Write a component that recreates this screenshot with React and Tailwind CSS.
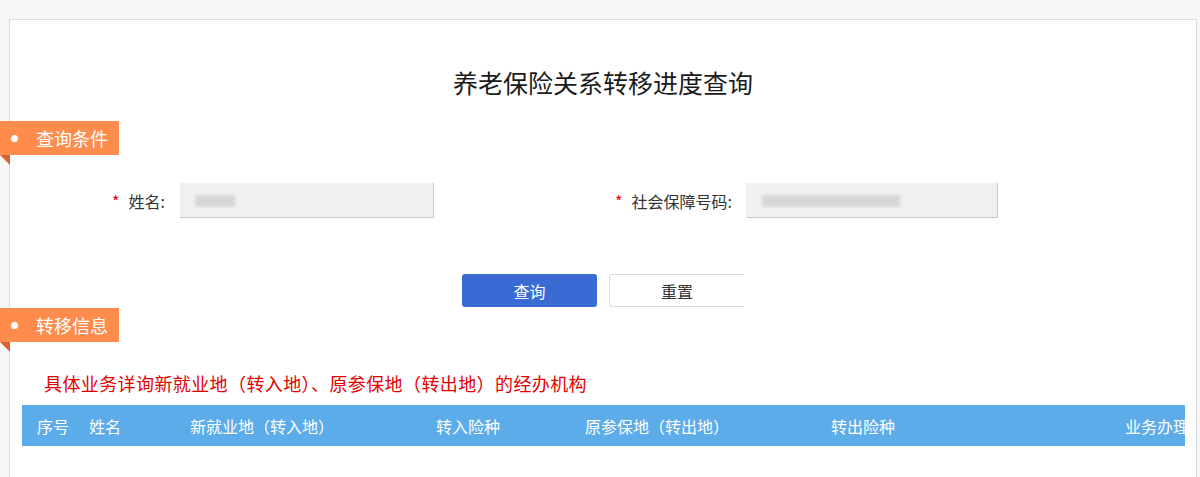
import React from 'react'

const font = { fontFamily: '"Noto Sans CJK SC", "Noto Sans", sans-serif' }

const SectionTag = ({ title }) => {
    return (
        <div className="-ml-[10px] w-[119px]">
            <div className="flex h-[34px] items-center bg-[#ff8c4c]">
                <span className="ml-[11px] h-[7px] w-[7px] rounded-full bg-white" />
                <span className="ml-[18px] text-[18px] leading-none text-white">{title}</span>
            </div>
            {/* folded corner */}
            <div className="h-[10px] w-[10px] bg-[#d8632c] [clip-path:polygon(0_0,100%_0,100%_100%)]" />
        </div>
    )
}

const BlurInput = ({ width, blob }) => {
    return (
        <div className={`relative h-[35px] ${width} overflow-hidden border-r border-b border-[#c9c9c9] bg-[#f2f0ef]`}>
            <div className={`absolute top-[12px] h-[12px] ${blob} bg-[#d9d7d6] blur-[1.5px]`} />
        </div>
    )
}

const columns = [
    { label: '序号', w: 'w-[52px]' },
    { label: '姓名', w: 'w-[101px]' },
    { label: '新就业地（转入地）', w: 'w-[246px]' },
    { label: '转入险种', w: 'w-[149px]' },
    { label: '原参保地（转出地）', w: 'w-[246px]' },
    { label: '转出险种', w: 'w-[294px]' },
    { label: '业务办理', w: 'w-[80px]' },
]

export default function App() {
    return (
        <div className="h-[477px] overflow-hidden bg-[#f8f8f8] pt-[19px] pl-[9px] pr-[3px]" style={font}>
            <div className="min-h-[470px] border border-b-0 border-[#dcdcdc] bg-white">

                {/* TITLE */}
                <h1 className="pt-[46px] text-center text-[25px] leading-[32px] text-[#1a1a1a]">
                    养老保险关系转移进度查询
                </h1>

                <div className="mt-[23px]">
                    <SectionTag title="查询条件" />
                </div>

                {/* FORM */}
                <div className="mt-[18px] flex items-center text-[16px] text-[#333]">
                    <div className="w-[155px] text-right">
                        <span className="mr-[9px] text-[#e60012]">*</span>姓名:
                    </div>
                    <div className="ml-[15px]">
                        <BlurInput width="w-[254px]" blob="left-[15px] w-[40px]" />
                    </div>
                    <div className="w-[298px] text-right">
                        <span className="mr-[9px] text-[#e60012]">*</span>社会保障号码:
                    </div>
                    <div className="ml-[14px]">
                        <BlurInput width="w-[252px]" blob="left-[16px] w-[138px]" />
                    </div>
                </div>

                {/* BUTTONS */}
                <div className="mt-[56px] flex justify-center gap-3">
                    <button className="h-[33px] w-[135px] rounded-[3px] bg-[#3a6bd5] text-[16px] text-white">
                        查询
                    </button>
                    <button className="h-[33px] w-[135px] rounded-l-[3px] border border-r-0 border-[#dcdcdc] bg-white text-[16px] text-[#333]">
                        重置
                    </button>
                </div>

                <div className="mt-[1px]">
                    <SectionTag title="转移信息" />
                </div>

                <p className="mt-[19px] ml-[34px] text-[18px] leading-[24px] tracking-[0.4px] text-[#e50000]">
                    具体业务详询新就业地（转入地）、原参保地（转出地）的经办机构
                </p>

                {/* TABLE HEADER */}
                <div className="mt-[10px] ml-[12px] mr-[11px] flex h-[41px] items-center overflow-hidden whitespace-nowrap bg-[#5dacea] pl-[15px] text-[16px] text-white">
                    {columns.map((c) => (
                        <div key={c.label} className={`${c.w} shrink-0`}>{c.label}</div>
                    ))}
                </div>
            </div>
        </div>
    )
}
